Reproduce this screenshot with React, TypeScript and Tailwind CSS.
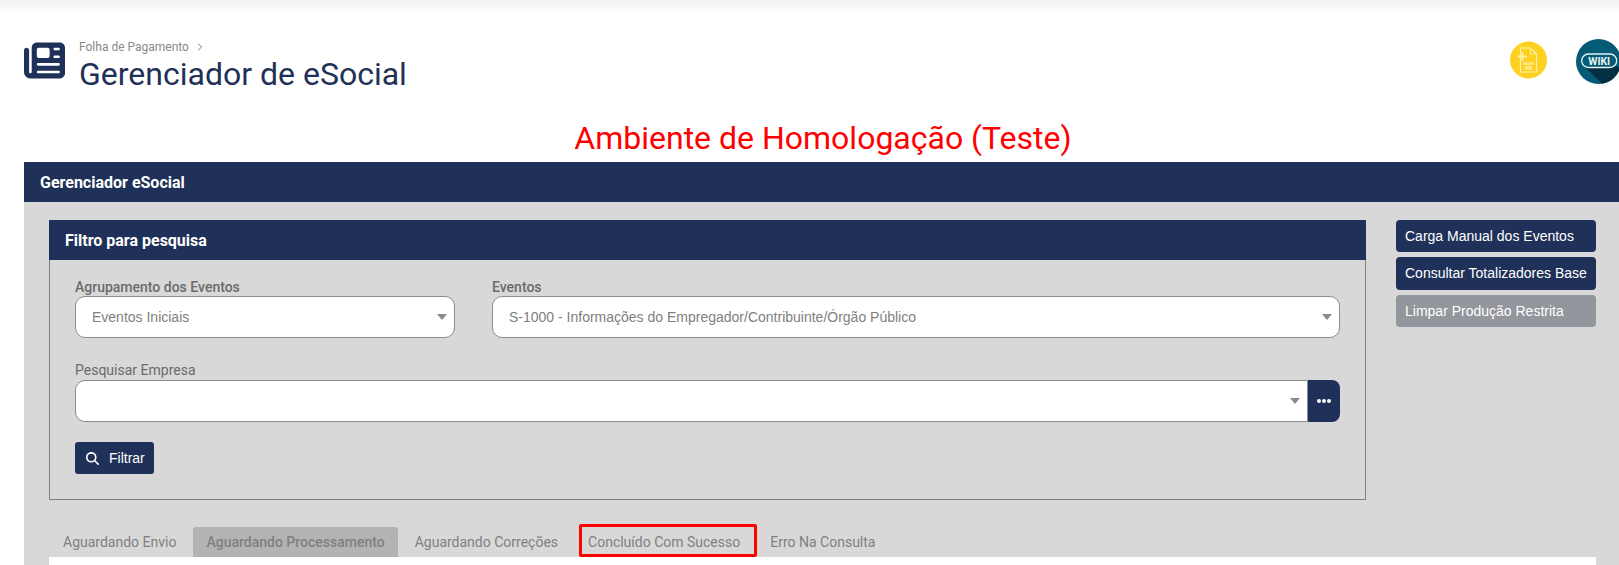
import { ChevronRight } from "lucide-react";
import { FaNewspaper, FaMagnifyingGlass } from "react-icons/fa6";

const navy = "bg-[#1f3158]";

const XmlIcon = () => (
  <svg width="37" height="38" viewBox="0 0 37 38">
    <circle cx="18.5" cy="19" r="18.5" fill="#fdd11f" />
    <path d="M10.5 7h10l6 6v18h-16z" fill="none" stroke="#fff0a8" strokeWidth="1.2" />
    <path d="M20.5 7v6h6" fill="none" stroke="#fff0a8" strokeWidth="1" />
    <path d="M8 15.5h9M12.5 11v9" stroke="#fff0a8" strokeWidth="1.8" />
    <rect x="13" y="21" width="11" height="3" fill="#fff0a8" opacity="0.65" />
    <rect x="15" y="25" width="7" height="4" fill="#fff0a8" opacity="0.65" />
  </svg>
);

const WikiIcon = () => (
  <svg width="45" height="45" viewBox="0 0 45 45">
    <circle cx="22.5" cy="22.5" r="22.5" fill="#055a75" />
    <path d="M8 27L26 44.7a22.5 22.5 0 0 0 18-15.5l-3-2.2z" fill="#042f43" />
    <rect x="5.7" y="15" width="35" height="13.5" rx="6.7" fill="#055a75" stroke="#e6f0f3" strokeWidth="1.3" />
    <text x="23.2" y="25.8" textAnchor="middle" fill="#e6f0f3" fontSize="10.5" fontWeight="700" fontFamily="Roboto, sans-serif">WIKI</text>
  </svg>
);

const Caret = () => (
  <span className="w-0 h-0 border-x-[5.5px] border-x-transparent border-t-[6px] border-t-[#8a8a8a]" />
);

const Select = ({ value }: { value: string }) => (
  <div className="h-[42px] bg-white border border-[#8c8c8c] rounded-[10px] flex items-center justify-between pl-4 pr-[7px] text-sm text-[#808080] font-['Liberation_Sans',sans-serif]">
    <span>{value}</span>
    <Caret />
  </div>
);

const SideButton = ({ label, muted, h }: { label: string; muted?: boolean; h: string }) => (
  <button className={`w-[200px] ${h} rounded-[4px] text-left pl-[9px] text-[14px] text-white font-['Liberation_Sans',sans-serif] ${muted ? "bg-[#93969c]" : navy}`}>
    {label}
  </button>
);

export default function App() {
  return (
    <div className="w-[1619px] h-[565px] overflow-hidden bg-white flex flex-col font-['Roboto',sans-serif]">
      <div className="h-[14px] shrink-0 bg-gradient-to-b from-[#f1f1f1] to-white" />

      {/* cabeçalho */}
      <div className="h-[78px] shrink-0 flex justify-between pl-6">
        <div className="flex items-start gap-[14px] pt-[26px]">
          <FaNewspaper size={41} color="#1f3158" className="shrink-0" />
          <div>
            <div className="flex items-center gap-[5px] text-xs text-[#8a8a8a] leading-[14px]">
              Folha de Pagamento
              <ChevronRight size={12} strokeWidth={2} className="text-[#777777]" />
            </div>
            <h1 className="mt-[1px] text-[32px] leading-[38px] text-[#1f3158] font-normal">Gerenciador de eSocial</h1>
          </div>
        </div>
        <div className="flex items-start gap-[29px] pt-[27px]">
          <XmlIcon />
          <div className="-mt-[2px] w-[43px] overflow-hidden">
            <WikiIcon />
          </div>
        </div>
      </div>

      <div className="h-[70px] shrink-0 flex items-center justify-center pt-[22px] pl-[27px] text-[32px] text-[#ff0000]">
        Ambiente de Homologação (Teste)
      </div>

      {/* painel principal */}
      <div className="ml-6 flex-1 min-h-0 bg-[#d8d8d8] flex flex-col">
        <div className={`h-10 shrink-0 ${navy} flex items-center pl-4 pt-[2px] text-base font-bold text-white`}>
          Gerenciador eSocial
        </div>

        <div className="flex items-start pl-[25px] pt-[18px]">
          <section className="w-[1317px] h-[280px] shrink-0 border border-[#808080] border-t-0">
            <div className={`h-10 -mx-px ${navy} flex items-center pl-4 pt-[2px] text-base font-bold text-white`}>
              Filtro para pesquisa
            </div>
            <div className="px-[25px] pt-[18px]">
              <div className="flex gap-[37px]">
                <div className="w-[380px]">
                  <div className="text-sm leading-[18px] font-medium text-[#6b6b6b]">Agrupamento dos Eventos</div>
                  <Select value="Eventos Iniciais" />
                </div>
                <div className="flex-1">
                  <div className="text-sm leading-[18px] font-medium text-[#6b6b6b]">Eventos</div>
                  <Select value="S-1000 - Informações do Empregador/Contribuinte/Órgão Público" />
                </div>
              </div>
              <div className="mt-[23px] text-sm leading-[19px] text-[#6b6b6b]">Pesquisar Empresa</div>
              <div className="flex h-[42px]">
                <div className="flex-1 bg-white border border-[#8c8c8c] rounded-l-[10px] flex items-center justify-end pr-[7px]">
                  <Caret />
                </div>
                <button className={`w-8 ${navy} rounded-r-[8px] flex items-center justify-center gap-[1.5px]`}>
                  <span className="w-[3.5px] h-[3.5px] rounded-full bg-white" />
                  <span className="w-[3.5px] h-[3.5px] rounded-full bg-white" />
                  <span className="w-[3.5px] h-[3.5px] rounded-full bg-white" />
                </button>
              </div>
              <button className={`mt-[20px] w-[79px] h-8 ${navy} rounded-[3px] flex items-center pl-[11px] gap-[10px] text-sm text-white font-['Liberation_Sans',sans-serif]`}>
                <FaMagnifyingGlass size={13} />
                Filtrar
              </button>
            </div>
          </section>

          <div className="ml-[30px] flex flex-col gap-[5px]">
            <SideButton label="Carga Manual dos Eventos" h="h-[32px]" />
            <SideButton label="Consultar Totalizadores Base" h="h-[33px]" />
            <SideButton label="Limpar Produção Restrita" h="h-[32px]" muted />
          </div>
        </div>

        {/* abas */}
        <div className="mt-[26px] ml-[25px] flex items-end h-[31px] text-sm text-[#808080]">
          <div className="pl-[14px] pr-[17px] leading-[30px]">Aguardando Envio</div>
          <div className="px-[13px] h-[30px] leading-[30px] bg-[#b3b3b3] rounded-t-[3px] font-medium">Aguardando Processamento</div>
          <div className="pl-[17px] pr-[21px] leading-[30px]">Aguardando Correções</div>
          <div className="h-[33px] border-[3px] border-[#ff0000] rounded-[2px] pl-[6px] pr-[14px] leading-[30px]">Concluído Com Sucesso</div>
          <div className="pl-[13px] leading-[30px]">Erro Na Consulta</div>
        </div>
        <div className="ml-[25px] mr-[23px] flex-1 bg-white" />
      </div>
    </div>
  );
}
